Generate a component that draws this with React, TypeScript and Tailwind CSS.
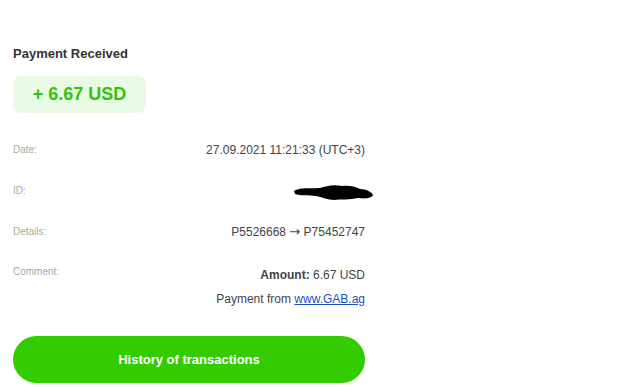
import React from 'react'

const Row = ({ label, children }: { label: string; children: React.ReactNode }) => (
  <div className="flex justify-between items-center h-[41px]">
    <span className="text-[10px] text-[#a8a8a8]">{label}</span>
    <div className="text-[12px] text-[#444]">{children}</div>
  </div>
)

const App = () => {
  return (
    <div className="w-[640px] h-[387px] bg-white overflow-hidden" style={{ fontFamily: '"Liberation Sans", Arial, sans-serif' }}>
      <div className="w-[352px] ml-[13px] pt-[46px]">
        <h1 className="text-[13px] font-bold text-[#333] leading-[16px]">Payment Received</h1>
        <div className="mt-[14px] w-[133px] h-[37px] rounded-lg bg-[#eafbe5] flex items-center justify-center">
          <span className="text-[18px] font-bold text-[#35c20f]">+ 6.67 USD</span>
        </div>
        <div className="mt-[16px]">
          <Row label="Date:">27.09.2021 11:21:33 (UTC+3)</Row>
          <Row label="ID:">
            <svg width="82" height="18" viewBox="0 0 82 18" className="mr-[-9px] mt-[2px]">
              <path d="M2 8 C8 4 18 6 28 5 C34 3 42 1 50 3 C58 2 64 4 68 6 C74 6 80 9 81 12 C80 15 74 16 66 15 C58 17 48 16 42 17 C36 17 30 14 24 13 C16 12 8 13 3 11 Z" fill="#000" />
            </svg>
          </Row>
          <Row label="Details:">
            P5526668 <span style={{ fontFamily: '"DejaVu Sans", sans-serif' }} className="text-[13px]">→</span> P75452747
          </Row>
          <div className="flex justify-between items-start pt-[12px]">
            <span className="text-[10px] text-[#a8a8a8]">Comment:</span>
            <div className="text-right text-[12px] text-[#444] leading-[24px] mt-[-1px]">
              <div><span className="font-bold">Amount:</span> 6.67 USD</div>
              <div>Payment from <a className="text-[#1a4fc0] underline">www.GAB.ag</a></div>
            </div>
          </div>
        </div>
        <button className="mt-[25px] w-full h-[47px] rounded-full bg-[#33cc00] text-white text-[13px] font-bold">
          History of transactions
        </button>
      </div>
    </div>
  )
}

export default App
